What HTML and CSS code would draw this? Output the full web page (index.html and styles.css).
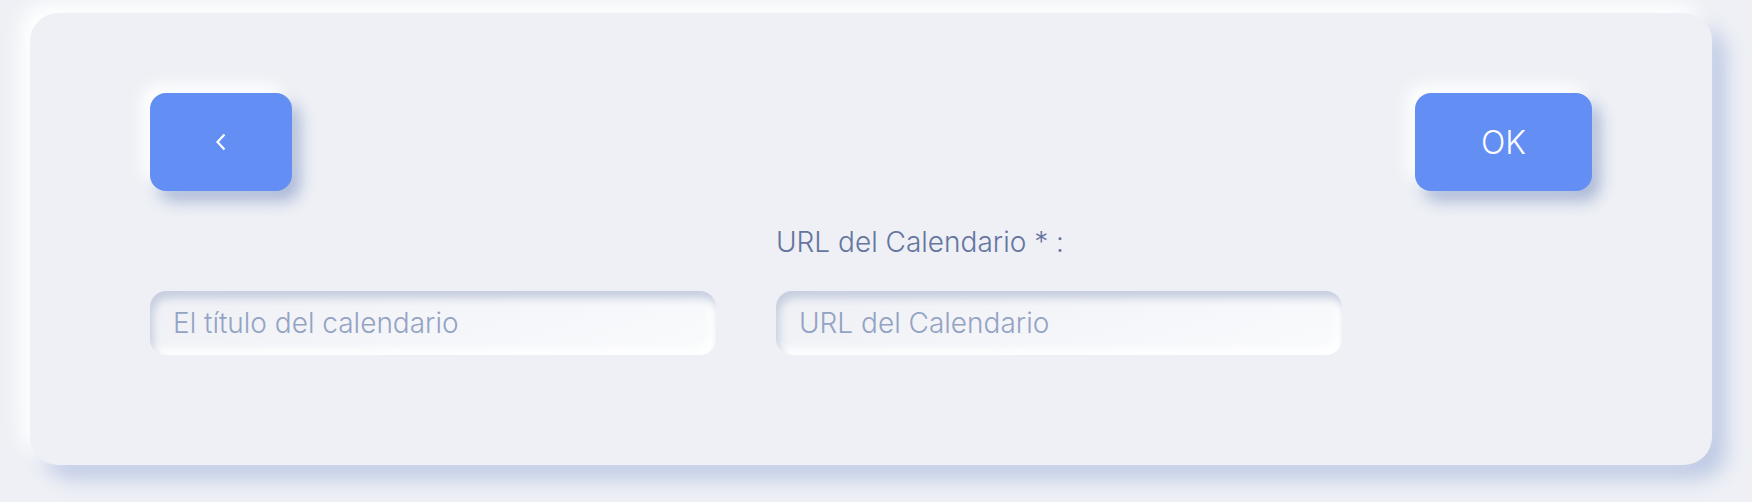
FILE: index.html
```html
<!DOCTYPE html>
<html lang="es">
<head>
    <meta charset="UTF-8">
    <meta name="viewport" content="width=device-width, initial-scale=1.0">
    <title>Nuevo calendario</title>
    <link rel="stylesheet" href="styles.css">
</head>
<body>
    <div class="panel">
        <div class="panel-header">
            <button class="button" type="button" aria-label="Volver">
                <svg class="chevron" width="10" height="18" viewBox="0 0 10 18">
                    <polyline points="8.5,1.5 1.5,9 8.5,16.5" fill="none" stroke="#ffffff" stroke-width="2.2"/>
                </svg>
            </button>
            <button class="button" type="submit" form="calendar-form">OK</button>
        </div>
        <form id="calendar-form" class="calendar-form">
            <div class="field">
                <input type="text" class="field-input" name="title" placeholder="El título del calendario">
            </div>
            <div class="field">
                <label class="field-label" for="url">URL del Calendario * :</label>
                <input type="text" class="field-input" id="url" name="url" placeholder="URL del Calendario" required>
            </div>
        </form>
    </div>
</body>
</html>
```

FILE: styles.css
```css
body {
    font-family: Inter, "Noto Sans", sans-serif;
    font-weight: 300;
    margin: 0;
    padding: 13px 40px 37px 30px;
    background-color: #eef0f5;
}
.panel {
    background-color: #eef0f5;
    border-radius: 28px;
    padding: 80px 120px 110px;
    box-shadow: -10px -10px 20px #ffffff, 14px 14px 20px #bfcae5;
}
.panel-header {
    display: flex;
    justify-content: space-between;
    margin-bottom: 34px;
}
.button {
    height: 98px;
    padding: 0 66px;
    border: none;
    border-radius: 16px;
    background-color: #638ef4;
    color: #ffffff;
    font-family: inherit;
    font-weight: 300;
    font-size: 32px;
    display: flex;
    align-items: center;
    justify-content: center;
    cursor: pointer;
    box-shadow: -8px -8px 16px #ffffff, 8px 10px 16px #a9b7d6;
}
.chevron {
    display: block;
}
.calendar-form {
    display: grid;
    grid-template-columns: 566px 566px;
    column-gap: 60px;
    align-items: end;
}
.field {
    display: flex;
    flex-direction: column;
}
.field-label {
    color: #65759f;
    font-size: 28px;
    margin-bottom: 32px;
}
.field-input {
    height: 64px;
    box-sizing: border-box;
    padding: 0 23px;
    border: none;
    border-radius: 16px;
    outline: none;
    font-family: inherit;
    font-weight: 300;
    font-size: 28px;
    color: #65759f;
    background: linear-gradient(160deg, #eef0f5, #fafbfd);
    box-shadow: inset 3px 7px 9px #c6cddf, inset -6px -6px 10px #ffffff;
}
.field-input::placeholder {
    color: #94a3c4;
}
```
